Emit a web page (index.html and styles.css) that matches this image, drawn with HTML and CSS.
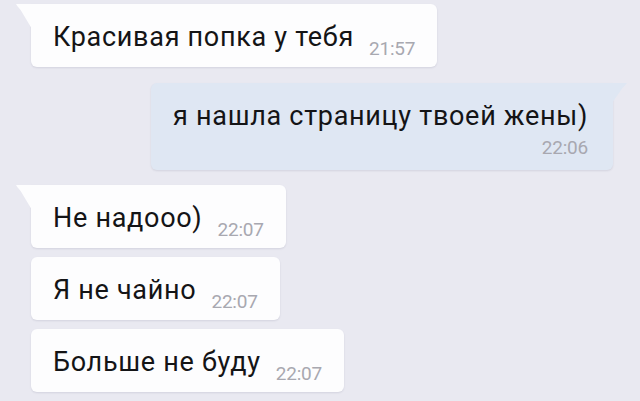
FILE: index.html
```html
<!DOCTYPE html>
<html lang="ru">
<head>
<meta charset="utf-8">
<link rel="stylesheet" href="styles.css">
</head>
<body>
<div class="chat">
  <div class="msg in tail">
    <div class="row">
      <span class="text">Красивая попка у тебя</span>
      <span class="time">21:57</span>
    </div>
  </div>
  <div class="msg out tail">
    <div class="text">я нашла страницу твоей жены)</div>
    <div class="time">22:06</div>
  </div>
  <div class="msg in tail">
    <div class="row">
      <span class="text">Не надооо)</span>
      <span class="time">22:07</span>
    </div>
  </div>
  <div class="msg in">
    <div class="row">
      <span class="text">Я не чайно</span>
      <span class="time">22:07</span>
    </div>
  </div>
  <div class="msg in">
    <div class="row">
      <span class="text">Больше не буду</span>
      <span class="time">22:07</span>
    </div>
  </div>
</div>
</body>
</html>
```
FILE: styles.css
```css
html, body {
  margin: 0;
  padding: 0;
}
body {
  width: 640px;
  height: 401px;
  overflow: hidden;
  background: #e9e9f1;
  font-family: Roboto, "Noto Sans", sans-serif;
  color: #141416;
}
.chat {
  display: flex;
  flex-direction: column;
  padding: 4px 27px 0 31px;
}
.msg {
  position: relative;
  background: #fdfdfe;
  border-radius: 6px;
  box-shadow: 0 1px 2px rgba(60, 60, 90, 0.12);
  padding: 18px 22px 7px 22px;
  margin-bottom: 9px;
}
.msg.in {
  align-self: flex-start;
}
.msg.out {
  align-self: flex-end;
  background: #dfe7f3;
  margin-top: 7px;
  margin-bottom: 15px;
  padding: 18px 25px 11px 22px;
  display: flex;
  flex-direction: column;
}
.msg.in.tail {
  border-top-left-radius: 0;
}
.msg.out.tail {
  border-top-right-radius: 0;
}
.msg.in.tail::before {
  content: "";
  position: absolute;
  top: 0;
  left: -15px;
  width: 16px;
  height: 25px;
  background: #fdfdfe;
  clip-path: polygon(0 0, 100% 0, 100% 100%, 30% 25%, 8% 8%);
}
.msg.out.tail::before {
  content: "";
  position: absolute;
  top: 0;
  right: -14px;
  width: 15px;
  height: 20px;
  background: #dfe7f3;
  clip-path: polygon(0 0, 100% 0, 92% 8%, 70% 25%, 0 100%);
}
.row {
  display: flex;
  align-items: flex-start;
}
.text {
  font-size: 27px;
  line-height: 30px;
  letter-spacing: 0.7px;
  white-space: nowrap;
}
.time {
  font-size: 19px;
  line-height: 22px;
  color: #a8a8b0;
  letter-spacing: -0.2px;
}
.row .time {
  margin-left: 15px;
  margin-top: 16px;
}
.msg.out .time {
  align-self: flex-end;
  margin-top: 6px;
}
```
